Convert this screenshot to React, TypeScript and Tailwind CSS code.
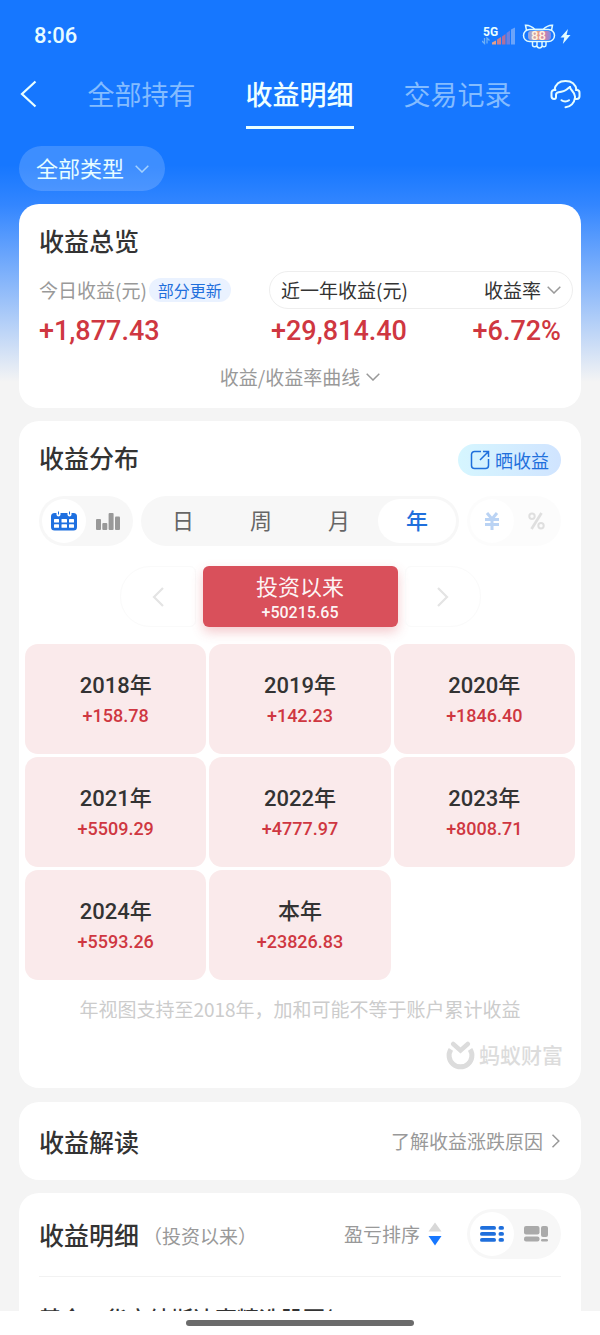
import { useState, ReactNode } from "react";

const years = [
  { label: "2018年", value: "+158.78" },
  { label: "2019年", value: "+142.23" },
  { label: "2020年", value: "+1846.40" },
  { label: "2021年", value: "+5509.29" },
  { label: "2022年", value: "+4777.97" },
  { label: "2023年", value: "+8008.71" },
  { label: "2024年", value: "+5593.26" },
  { label: "本年", value: "+23826.83" },
];

const tabs = ["全部持有", "收益明细", "交易记录"];
const periods = ["日", "周", "月", "年"];

// amounts use Roboto, Chinese falls back to Noto
const num = "font-[Roboto,'Noto_Sans_CJK_SC',sans-serif]";

const ChevronDown = ({ className = "" }: { className?: string }) => (
  <svg className={className} width="14" height="8" viewBox="0 0 14 8" fill="none" stroke="currentColor" strokeWidth="1.5">
    <path d="M0.7 0.7 7 7l6.300-6.300" />
  </svg>
);

const StatusBar = () => (
  <div className="flex items-center justify-between pt-5 pl-[34px] pr-[29px]">
    <span className={`${num} text-[22px] leading-8 font-medium text-[#e6fbff]`}>8:06</span>
    <div className="flex items-center gap-1.5">
      <svg width="34" height="20" viewBox="0 0 34 20">
        <text x="1" y="9.500" fontSize="12" fontWeight="700" fill="#eaffff" fontFamily="Roboto, sans-serif">5G</text>
        <path d="M2.500 12v5.500L0 15M5 17.500V12l2.500 2.500" fill="none" stroke="#6fb0f5" strokeWidth="1.300" />
        <path d="M10 18.500v-2l4-2v4z" fill="#e3a08c" />
        <path d="M15 18.500v-5l4-2.500v7.500z" fill="#c98090" />
        <path d="M20 18.500v-8l3.500-2.500v10.500z" fill="#b0709c" />
        <path d="M24.500 18.500V7l3.500-2.500v14z" fill="#6b80e0" />
        <path d="M29 18.500V3.500l4-2v17z" fill="#6ba4fa" />
      </svg>
      <svg width="34" height="25" viewBox="0 0 34 25" fill="none" stroke="#dffaff" strokeWidth="1.500">
        <defs>
          <linearGradient id="cell" x1="0" x2="1" y1="0" y2="0">
            <stop offset="0" stopColor="#8aa5e8" />
            <stop offset=".4" stopColor="#e8a088" />
            <stop offset=".75" stopColor="#c77fae" />
            <stop offset="1" stopColor="#7f8fe8" />
          </linearGradient>
        </defs>
        <rect x="6" y="7" width="23" height="9" rx="3" fill="url(#cell)" stroke="none" />
        <path d="M4.500 6.500 3.500 1.200C7 1 10 2.500 13 5.500h8C24 2.500 27 1 30.500 1.200l-1 5.300" />
        <rect x="1.500" y="5.500" width="31" height="12" rx="6" />
        <path d="M10.500 17.500v3.500c0 2 4 2.300 4.500.3.500 3.500 4.500 3.500 5 0 .7 2 4 1.700 4-.3v-3.500M15 18v3M20 18v3" />
        <text x="16.500" y="16" textAnchor="middle" fontSize="13" fontWeight="500" fill="#fff3e2" stroke="none" fontFamily="Roboto, sans-serif">88</text>
      </svg>
      <svg className="-ml-0.5" width="11" height="15" viewBox="0 0 11 15" fill="#e2fbff">
        <path d="M8 0 .5 8.500h3.800L2.800 15l7.700-9H6.600z" />
      </svg>
    </div>
  </div>
);

const Toggle = ({ faded, left, right, labels }: { faded?: boolean; left: ReactNode; right: ReactNode; labels: string[] }) => (
  <div className={`flex h-[50px] shrink-0 items-center rounded-full bg-[#f7f7f7] p-[3px] ${faded ? "opacity-30" : ""}`}>
    <button aria-label={labels[0]} aria-pressed="true" className="flex size-11 items-center justify-center rounded-full bg-white">{left}</button>
    <button aria-label={labels[1]} aria-pressed="false" className="flex size-11 items-center justify-center rounded-full">{right}</button>
  </div>
);

const Header = () => (
  <header>
    <StatusBar />
    <nav className="mt-[11px] flex h-[66px] items-center justify-between pl-5 pr-[19px]">
      <button aria-label="返回" className="mb-1 text-[#eaffff]">
        <svg width="17" height="28" viewBox="0 0 17 28" fill="none" stroke="currentColor" strokeWidth="2.200">
          <path d="M15.500 1.500 2 14l13.500 12.500" />
        </svg>
      </button>
      <div className="flex gap-[50px] pl-3">
        {tabs.map((tab) => (
          <a
            key={tab}
            href="#"
            className={
              tab === "收益明细"
                ? "flex h-[66px] items-center border-b-3 border-[#eaffff] text-[27px] font-medium text-[#f0ffff]"
                : "flex h-[66px] items-center pb-[3px] text-[27px] text-[#84bcff]"
            }
          >
            {tab}
          </a>
        ))}
      </div>
      <button aria-label="客服" className="mb-1 text-[#e6fdff]">
        <svg width="31" height="30" viewBox="0 0 31 30" fill="none" stroke="currentColor" strokeWidth="2" strokeLinecap="round" strokeLinejoin="round">
          <path d="M4.500 11C5.500 5 10 2 15.500 2s10 3 11 9" />
          <path d="M5.500 11H4.200a2.700 2.700 0 0 0-2.700 2.700v3.600A2.700 2.700 0 0 0 4.200 20c1.200 0 1.800-.8 1.800-2v-2c0-1.500 1-2.500 2.500-2.700 3.500-.5 6.500-1.300 8.500-3 1-.8 2-1.800 3-2.300" />
          <path d="M20 8c0 3 5 5 5 9.500V20h1.800a2.700 2.700 0 0 0 2.700-2.700v-3.600a2.700 2.700 0 0 0-2.700-2.700h-.8" />
          <path d="M25 18.500c-.6 5.500-4.500 9.500-9.500 9.700" />
          <path d="M11.500 21.200c2 1.600 5.500 1.600 7.500 0" />
        </svg>
      </button>
    </nav>
    <label className="mt-[17px] ml-[19px] inline-flex h-[45px] items-center gap-2.5 rounded-full bg-white/17 pr-4 pl-[17px] text-[#e6fdff]">
      <select aria-label="类型" className="appearance-none bg-transparent pb-[3px] text-[22px] leading-8 outline-none">
        <option>全部类型</option>
      </select>
      <ChevronDown className="text-[#a4d2ff]" />
    </label>
  </header>
);

const Overview = () => (
  <section className="mt-[13px] rounded-[20px] bg-white px-5 pt-5 pb-4">
    <h2 className="text-[25px] leading-8 font-medium">收益总览</h2>
    <div className="mt-3.5 flex justify-between">
      <div>
        <div className="flex h-10 items-center gap-0.5">
          <span className="text-[19px] text-[#999]">今日收益(元)</span>
          <span className="rounded-full bg-[#eaf2ff] px-[9px] text-[16px] leading-6 text-[#1f6fdc]">部分更新</span>
        </div>
        <p className={`${num} mt-[5px] text-[27px] leading-8 font-medium text-[#cf3741]`}>+1,877.43</p>
      </div>
      <div className="-mr-3 w-[304px] pt-px">
        <button className="flex h-[38px] w-full items-center rounded-full border border-[#eee] px-[11px] text-[19px]">
          <span>近一年收益(元)</span>
          <span className="ml-auto">收益率</span>
          <ChevronDown className="ml-1.5 text-[#999]" />
        </button>
        <p className={`${num} mt-1.5 flex justify-between pr-3 pl-[2px] text-[27px] leading-8 font-medium text-[#cf3741]`}>
          <span>+29,814.40</span>
          <span>+6.72%</span>
        </p>
      </div>
    </div>
    <button className="mx-auto mt-[15px] flex items-center gap-1.5 text-[19px] leading-[30px] text-[#999]">
      收益/收益率曲线
      <ChevronDown />
    </button>
  </section>
);

const Distribution = () => {
  const [period, setPeriod] = useState("年");
  return (
    <section className="mt-[13px] rounded-[20px] bg-white pt-5 pb-4">
      <div className="flex items-start justify-between px-5">
        <h2 className="text-[25px] leading-8 font-medium">收益分布</h2>
        <button className="mt-[3px] flex h-8 items-center gap-1 rounded-full bg-linear-to-r from-[#d6f6ff] to-[#d0e4ff] px-3 text-[18px] leading-7 text-[#1f6fdc]">
          <svg width="21" height="20" viewBox="0 0 21 20" fill="none" stroke="currentColor" strokeWidth="1.500">
            <path d="M11 1.500H4.500a3 3 0 0 0-3 3v11a3 3 0 0 0 3 3h11a3 3 0 0 0 3-3V9M10 10l8.500-8.500M13 1.500h5.500V7" />
          </svg>
          晒收益
        </button>
      </div>
      <div className="mt-5 flex justify-between gap-2 px-5">
        <Toggle
          labels={["日历", "柱状图"]}
          left={
            <svg width="26" height="20" viewBox="0 0 26 20">
              <rect y="2" width="26" height="17.500" rx="3.500" fill="#1f70e0" />
              <g fill="#fff">
                <rect x="5.500" width="4" height="5.500" rx="2" />
                <rect x="16.500" width="4" height="5.500" rx="2" />
                <rect x="3" y="8" width="5" height="3.500" rx=".5" />
                <rect x="10.500" y="8" width="5.500" height="3.500" rx=".5" />
                <rect x="18" y="8" width="5" height="3.500" rx=".5" />
                <rect x="3" y="13.200" width="5" height="3.500" rx=".5" />
                <rect x="10.500" y="13.200" width="5.500" height="3.500" rx=".5" />
                <rect x="18" y="13.200" width="5" height="3.500" rx=".5" />
              </g>
              <path d="M7.500.5v3M18.500.5v3" stroke="#1f70e0" />
            </svg>
          }
          right={
            <svg width="24" height="17" viewBox="0 0 24 17" fill="#999">
              <rect y="6" width="5" height="11" rx="1" />
              <rect x="6.300" y="10" width="5" height="7" rx="1" />
              <rect x="12.600" width="5" height="17" rx="1" />
              <rect x="19" y="3.500" width="5" height="13.500" rx="1" />
            </svg>
          }
        />
        <div className="flex h-[50px] flex-1 rounded-full bg-[#f7f7f7] p-[3px]">
          {periods.map((p) => (
            <button
              key={p}
              onClick={() => setPeriod(p)}
              aria-pressed={p === period}
              className={`flex-1 rounded-full pb-[3px] text-[22px] ${p === period ? "bg-white font-medium text-[#1f6fdc]" : "text-[#666]"}`}
            >
              {p}
            </button>
          ))}
        </div>
        <Toggle
          faded
          labels={["金额", "百分比"]}
          left={
            <svg width="16" height="18" viewBox="0 0 16 18" fill="none" stroke="#1f6fdc" strokeWidth="3">
              <path d="M3 1l5 6 5-6M1 7.500h14M1 12.500h14M8 7v11" />
            </svg>
          }
          right={
            <svg width="17" height="18" viewBox="0 0 17 18" fill="none" stroke="#999" strokeWidth="2">
              <circle cx="4" cy="4.300" r="2.700" />
              <circle cx="13" cy="13.700" r="2.700" />
              <path d="M13.500 1 3.500 17" strokeWidth="2.800" />
            </svg>
          }
        />
      </div>
      <div className="mt-5 flex justify-center gap-[7px]">
        <button aria-label="上一页" className="flex w-19 items-center justify-center rounded-l-[30px] rounded-r-md border border-[#fafafa] text-[#e4e4e4]">
          <svg width="12" height="20" viewBox="0 0 12 20" fill="none" stroke="currentColor" strokeWidth="2.200">
            <path d="M11 1 2 10l9 9" />
          </svg>
        </button>
        <button className="flex h-[61px] w-[195px] flex-col items-center justify-center rounded-md bg-[#d9505b] text-white/95 shadow-[0_5px_12px_rgba(217,80,91,0.3)]">
          <span className="text-[22px] leading-8">投资以来</span>
          <span className={`${num} text-[16px] leading-6 font-medium`}>+50215.65</span>
        </button>
        <button aria-label="下一页" className="flex w-19 items-center justify-center rounded-l-md rounded-r-[30px] border border-[#fafafa] text-[#e4e4e4]">
          <svg width="12" height="20" viewBox="0 0 12 20" fill="none" stroke="currentColor" strokeWidth="2.200">
            <path d="m1 1 9 9-9 9" />
          </svg>
        </button>
      </div>
      <div className="mt-[17px] grid grid-cols-3 gap-[3px] px-1.5">
        {years.map((y) => (
          <button key={y.label} className={`${num} flex h-[110px] flex-col items-center justify-center rounded-[13px] bg-[#faeaeb] pt-[2px]`}>
            <span className="text-[22px] leading-8 font-medium">{y.label}</span>
            <span className="text-[18px] leading-7 font-medium text-[#cf3741]">{y.value}</span>
          </button>
        ))}
      </div>
      <p className="mt-[15px] text-center text-[19px] leading-7 text-[#ccc]">年视图支持至2018年，加和可能不等于账户累计收益</p>
      <div className="mt-[17px] flex items-center justify-end gap-1 pr-[18px] text-[21px] leading-7 text-[#dcdcdc]">
        <svg width="29" height="30" viewBox="0 0 29 30" fill="none" stroke="currentColor" strokeWidth="5">
          <path d="M4.900 8.300a11.400 11.400 0 1 0 19.200 0" />
          <path d="m7.200 3 7.300 6.500L21.800 3" strokeLinecap="round" strokeWidth="4.500" />
        </svg>
        <span className="pb-1 font-medium">蚂蚁财富</span>
      </div>
    </section>
  );
};

const Analysis = () => (
  <section className="mt-3.5 flex items-center justify-between rounded-[20px] bg-white px-5 py-[22px]">
    <h2 className="text-[25px] leading-[34px] font-medium">收益解读</h2>
    <a href="#" className="flex items-center gap-2 text-[19px] text-[#999]">
      了解收益涨跌原因
      <svg width="10" height="14" viewBox="0 0 10 14" fill="none" stroke="currentColor" strokeWidth="1.500">
        <path d="m1.500.8 6.300 6.200-6.300 6.200" />
      </svg>
    </a>
  </section>
);

const Details = () => (
  <section className="mt-[13px] rounded-t-[20px] bg-white px-5 pt-4">
    <div className="flex items-center border-b border-[#f2f2f2] pb-[17px]">
      <h2 className="text-[25px] leading-[34px] font-medium">收益明细</h2>
      <span className="mt-1 ml-1 text-[19px] text-[#999]">（投资以来）</span>
      <button className="ml-auto mr-[25px] flex items-center gap-2 text-[19px] text-[#999]">
        盈亏排序
        <svg width="14" height="24" viewBox="0 0 14 24">
          <path d="M7 .5 13.500 9.500H.5z" fill="#d8d8d8" />
          <path d="M.5 14h13L7 23.500z" fill="#1677ff" />
        </svg>
      </button>
      <Toggle
        labels={["列表", "卡片"]}
        left={
          <svg width="24" height="16" viewBox="0 0 24 16" fill="#1f6fdc">
            <rect width="16" height="3.800" rx="1.900" />
            <rect y="6" width="16" height="3.800" rx="1.900" />
            <rect y="12" width="16" height="3.800" rx="1.900" />
            <rect x="18.500" width="5.500" height="3.800" rx="1.900" />
            <rect x="18.500" y="6" width="5.500" height="3.800" rx="1.900" />
            <rect x="18.500" y="12" width="5.500" height="3.800" rx="1.900" />
          </svg>
        }
        right={
          <svg width="24" height="16" viewBox="0 0 24 16" fill="#aaa">
            <rect width="15.500" height="8.500" rx="2" />
            <rect y="10.500" width="15.500" height="5" rx="2" />
            <rect x="17" width="7" height="11" rx="2" />
            <rect x="17" y="13" width="7" height="2.500" rx="1.200" />
          </svg>
        }
      />
    </div>
    <p className="truncate pt-6 pb-6 text-[22px] leading-8 font-medium">基金·华宝纳斯达克精选股票(Q</p>
  </section>
);

const App = () => {
  return (
    <div className="flex h-screen flex-col bg-[#f4f4f4] font-['Noto_Sans_CJK_SC',sans-serif] text-[#333]">
      <main className="min-h-0 flex-1 overflow-y-auto [scrollbar-width:none]">
        <div className="bg-[linear-gradient(#1677ff_165px,#3386ff_205px,#f4f4f4_382px)]">
          <Header />
          <div className="px-[19px]">
            <Overview />
            <Distribution />
            <Analysis />
            <Details />
          </div>
        </div>
      </main>
      <footer className="flex h-6 shrink-0 justify-center bg-white pt-[9px]">
        <div className="h-1.5 w-[38%] rounded-full bg-[#6b6b6b]" />
      </footer>
    </div>
  );
};

export default App;
